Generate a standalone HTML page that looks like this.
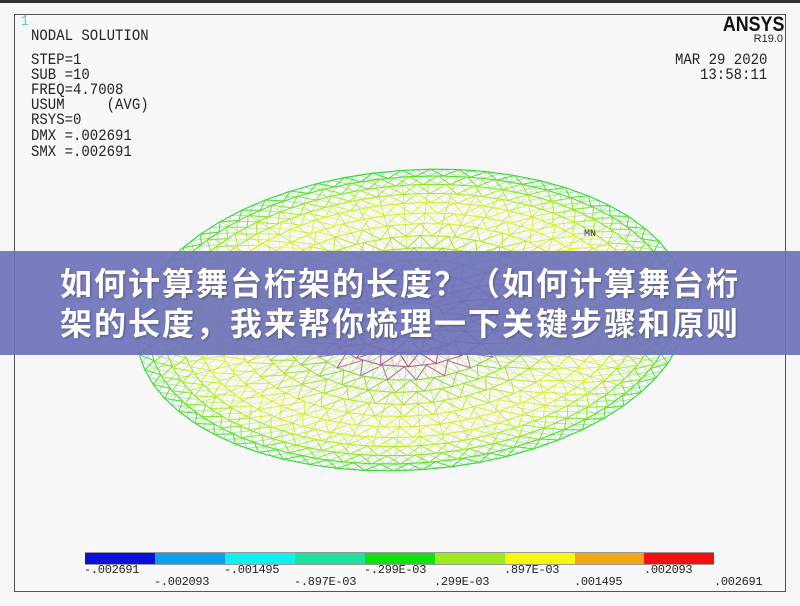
<!DOCTYPE html>
<html><head><meta charset="utf-8"><style>
html,body{margin:0;padding:0;width:800px;height:606px;overflow:hidden;background:#f6f6f6;font-family:"Liberation Serif",serif}
.top{position:absolute;left:0;top:0;width:800px;height:3px;background:#333}
.box{position:absolute;left:14px;top:14px;width:770px;height:576px;border:1px solid #555;background:#f8f8f8}
.t{position:absolute;font-size:14px;color:#222;white-space:pre;font-family:"Liberation Mono",monospace;transform:scaleY(1.1);transform-origin:top}
.banner{position:absolute;left:0;top:251px;width:800px;height:104px;background:rgba(110,114,186,0.92)}
.bt{position:absolute;left:0;width:800px;text-align:center;color:#fff;font-weight:bold;font-size:32px;letter-spacing:2px;font-family:"Liberation Sans","Noto Sans CJK SC",sans-serif;text-shadow:1px 1px 2px rgba(0,0,0,.3);line-height:40px}
.leg{position:absolute;top:552px;height:11px;border-top:1px solid #999;border-bottom:1px solid #999}
.lb{position:absolute;font-size:12px;color:#222;font-family:"Liberation Mono",monospace;letter-spacing:-0.3px}
</style></head><body>
<div class="top"></div>
<div class="box"></div>
<div class="t" style="left:21px;top:13px;color:#5cc;font-size:13px">1</div>
<div class="t" style="left:31px;top:28px">NODAL SOLUTION</div>
<div class="t" style="left:31px;top:52px">STEP=1</div>
<div class="t" style="left:31px;top:67px">SUB =10</div>
<div class="t" style="left:31px;top:82px">FREQ=4.7008</div>
<div class="t" style="left:31px;top:97px">USUM     (AVG)</div>
<div class="t" style="left:31px;top:112px">RSYS=0</div>
<div class="t" style="left:31px;top:128px">DMX =.002691</div>
<div class="t" style="left:31px;top:144px">SMX =.002691</div>
<div style="position:absolute;right:16px;top:13px;font:bold 21px 'Liberation Sans Narrow','Liberation Sans',sans-serif;color:#111;transform:scaleX(.85);transform-origin:right">ANSYS</div>
<div style="position:absolute;right:17px;top:33px;font:11px 'Liberation Sans',sans-serif;color:#222">R19.0</div>
<div class="t" style="left:675px;top:52px">MAR 29 2020</div>
<div class="t" style="left:700px;top:67px">13:58:11</div>
<svg id="m" width="800" height="606" style="position:absolute;left:0;top:0"></svg>
<div class="banner"></div>
<div class="bt" style="top:264px">如何计算舞台桁架的长度？（如何计算舞台桁</div>
<div class="bt" style="top:304px">架的长度，我来帮你梳理一下关键步骤和原则</div>
<div class="leg" style="left:85px;width:70px;background:#0a10d8"></div>
<div class="leg" style="left:155px;width:70px;background:#0ca0e8"></div>
<div class="leg" style="left:225px;width:70px;background:#10f0f0"></div>
<div class="leg" style="left:295px;width:70px;background:#20e0a0"></div>
<div class="leg" style="left:365px;width:70px;background:#10e010"></div>
<div class="leg" style="left:435px;width:70px;background:#a0e820"></div>
<div class="leg" style="left:505px;width:70px;background:#f6f610"></div>
<div class="leg" style="left:575px;width:69px;background:#f0a818"></div>
<div class="leg" style="left:644px;width:70px;background:#f41010"></div>
<div class="lb" style="left:84px;top:563px">-.002691</div>
<div class="lb" style="left:154px;top:575px">-.002093</div>
<div class="lb" style="left:224px;top:563px">-.001495</div>
<div class="lb" style="left:294px;top:575px">-.897E-03</div>
<div class="lb" style="left:364px;top:563px">-.299E-03</div>
<div class="lb" style="left:434px;top:575px">.299E-03</div>
<div class="lb" style="left:504px;top:563px">.897E-03</div>
<div class="lb" style="left:574px;top:575px">.001495</div>
<div class="lb" style="left:644px;top:563px">.002093</div>
<div class="lb" style="left:714px;top:575px">.002691</div>
<script>
(function(){
var s=document.getElementById('m'),h='';
var cx=412,cy=320,rx=276,ry=150,rot=-4*Math.PI/180;
function P(r,a){var x=rx*r*Math.cos(a),y=ry*r*Math.sin(a);return [cx+x*Math.cos(rot)-y*Math.sin(rot),cy+x*Math.sin(rot)+y*Math.cos(rot)];}
var rings=[1,.955,.9,.84,.78,.71,.64,.56,.48,.4,.31,.22,.12];
var cols=['#28d838','#50dc30','#88e428','#b0ea28','#d0f030','#e0f030','#d8ee38','#c0e830','#a8e030','#90d840','#b060a0','#c04080','#a04090'];
var N=60;
for(var i=0;i<rings.length;i++){
 var n=Math.max(12,Math.round(N*rings[i]));
 var pts=[];
 for(var k=0;k<=n;k++){var p=P(rings[i],k*2*Math.PI/n);pts.push(p[0].toFixed(1)+','+p[1].toFixed(1));}
 h+='<polyline points="'+pts.join(' ')+'" fill="none" stroke="'+cols[i]+'" stroke-width="1.1"/>';
 if(i<rings.length-1){
  var r2=rings[i+1],zz=[],zz2=[];
  for(var k=0;k<=n*2;k++){var a=k*Math.PI/n;var p=P(k%2?r2:rings[i],a);zz.push(p[0].toFixed(1)+','+p[1].toFixed(1));
   var q=P(k%2?rings[i]:r2,a);zz2.push(q[0].toFixed(1)+','+q[1].toFixed(1));}
  h+='<polyline points="'+zz.join(' ')+'" fill="none" stroke="'+cols[i+1]+'" stroke-width="1"/>';
  h+='<polyline points="'+zz2.join(' ')+'" fill="none" stroke="'+cols[i]+'" stroke-width="0.7" opacity=".6"/>';
 }
}
for(var k=0;k<N;k++){var a=k*2*Math.PI/N;var p1=P(1,a),p2=P(.12,a);
 h+='<line x1="'+p1[0]+'" y1="'+p1[1]+'" x2="'+p2[0]+'" y2="'+p2[1]+'" stroke="#9ee030" stroke-width=".7" opacity=".7"/>';}
h+='<text x="584" y="236" font-size="10" font-family="Liberation Mono" fill="#333">MN</text>';
h+='<text x="500" y="258" font-size="10" font-family="Liberation Mono" fill="#447">MX</text>';
s.innerHTML=h;
})();
</script>
</body></html>
